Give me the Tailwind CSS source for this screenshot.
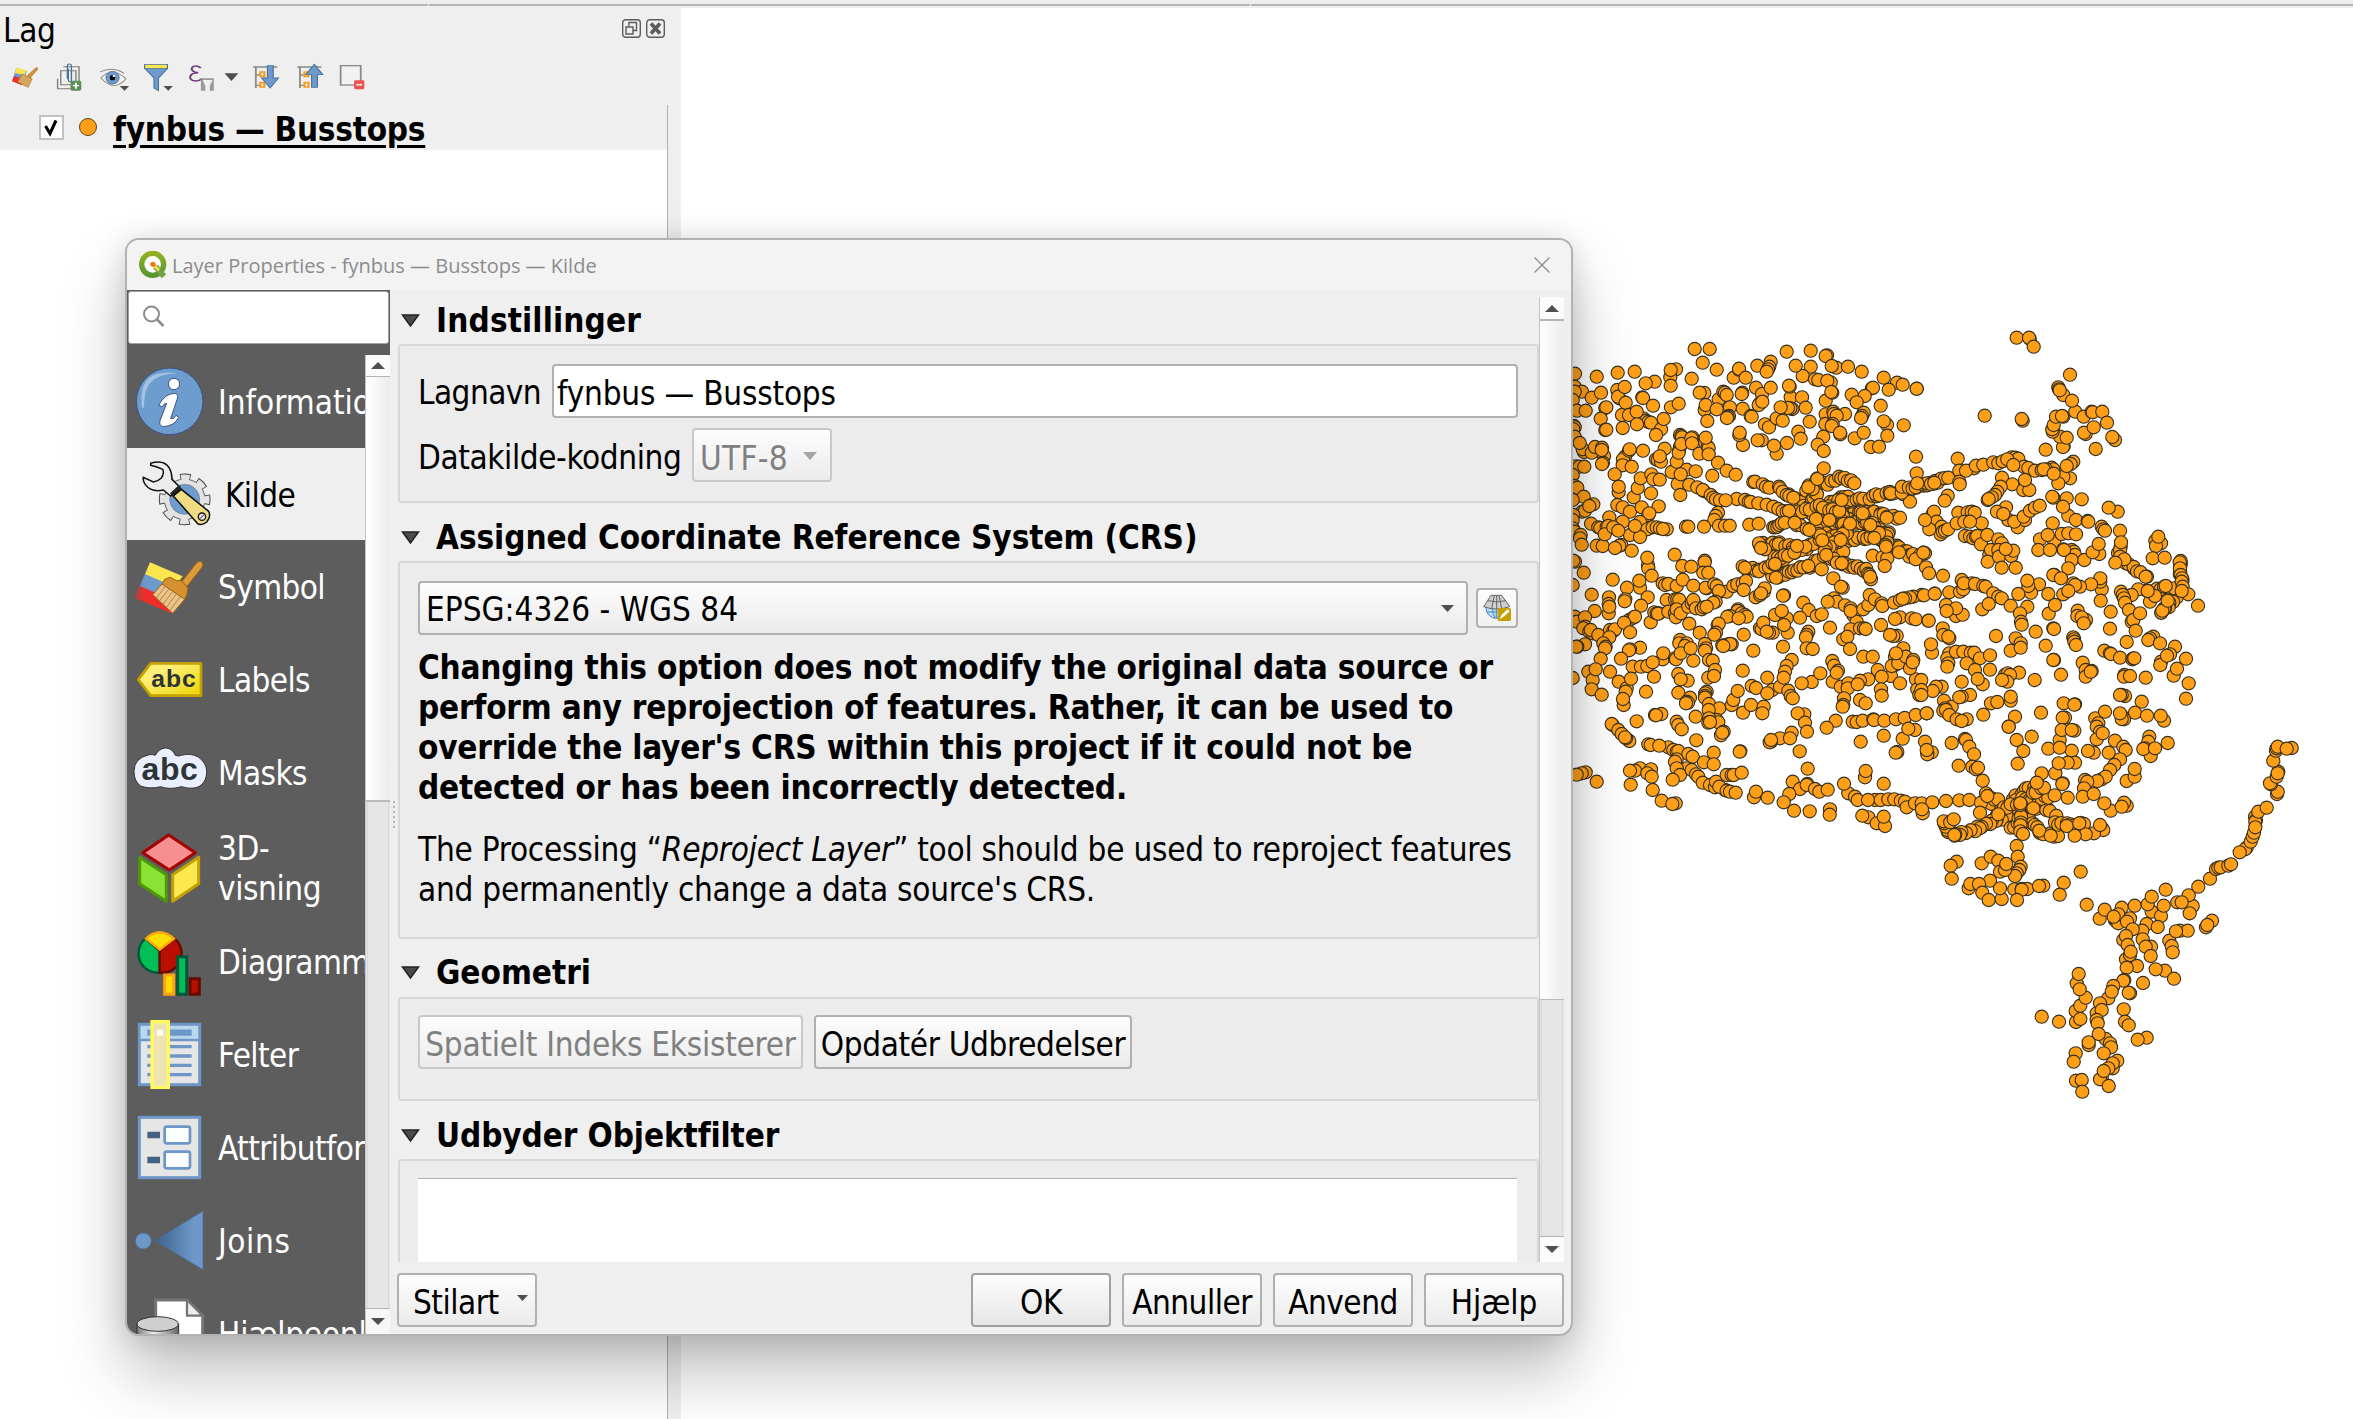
<!DOCTYPE html>
<html lang="da">
<head>
<meta charset="utf-8">
<title>Layer Properties</title>
<script src="https://cdn.jsdelivr.net/npm/@tailwindcss/browser@4"></script>
</head>
<body class="bg-white">
<div class="relative w-[2353px] h-[1419px] overflow-hidden bg-[#efefef] flex flex-col text-black text-[33px] leading-[40px] font-['DejaVu_Sans_Condensed','DejaVu_Sans',sans-serif] whitespace-nowrap tracking-[-0.3px]">
  <div class="h-[4px] shrink-0"></div>
  <div class="h-[2px] shrink-0 flex gap-[1px]"><div class="w-[428px] bg-[#b5b5b5]"></div><div class="w-[821px] bg-[#b5b5b5]"></div><div class="flex-1 bg-[#b5b5b5]"></div></div>

  <div class="flex flex-1 min-h-0">
    <aside class="w-[681px] shrink-0 flex flex-col">
      <div class="h-[50px] pl-[3px] pr-[16px] flex justify-between">
        <span class="pt-[5px]">Lag</span>
        <span class="flex gap-[5px] pt-[13px]">
          <svg width="19" height="19" viewBox="0 0 19 19" fill="none" stroke="#5c5c5c" stroke-width="1.4"><rect x=".7" y=".7" width="17.6" height="17.6" rx="3"/><path d="M7 7V3.5h7.5v8H11M4 8h7v7H4z"/></svg>
          <svg width="19" height="19" viewBox="0 0 19 19" fill="none" stroke="#5c5c5c" stroke-width="1.4"><rect x=".7" y=".7" width="17.6" height="17.6" rx="3"/><path d="M5 4.5l9 10M14 4.5l-9 10" stroke-width="3.6"/></svg>
        </span>
      </div>
      <div class="h-[49px] pt-[4px] pl-[8px] flex gap-[8px]">
        <svg width="36" height="36" viewBox="17.9 180 80.6 108" preserveAspectRatio="none"><path d="M36 204l24 9-8 34-24-5z" fill="#6d9acb"/><path d="M37 203l22 8-4 14-22-6z" fill="#fbe64d"/><path d="M30 230l20 22-22-8z" fill="#ee2d2a"/><path d="M27 244l6-16 20 12-4 16z" fill="#ee2d2a"/><path d="M62 226l20-24 3 5-18 27z" fill="#d6932f" stroke="#9c6214" stroke-width="1.5"/><path d="M50 222l22 14-9 26-24-16z" fill="#d9a662" stroke="#9c6214" stroke-width="1.5"/></svg>
        <svg width="36" height="36" viewBox="116.5 180 80.6 108" preserveAspectRatio="none" fill="none" stroke="#7d7d73" stroke-width="3"><path d="M129 236v30h30M136 212v42h34v-42zM142 200h35v44"/><path d="M151 236v-38q0-7 5-6 4 0 4 6v42q-1 6-4 5-3-1-3-5v-34" stroke="#47709c"/><rect x="158" y="242" width="24" height="30" rx="4" fill="#5a8f56" stroke="none"/><path d="M170 248v18M163 257h14" stroke="#fff" stroke-width="4"/></svg>
        <svg width="36" height="36" viewBox="215 180 80.6 108" preserveAspectRatio="none"><path d="M226 234q24-36 56 2-26 42-56-2z" fill="#f7f7f4" stroke="#8a8a82" stroke-width="2.5"/><path d="M224 216q28-18 54 4" fill="none" stroke="#8a8a82" stroke-width="2.5"/><ellipse cx="252" cy="233" rx="15" ry="19" fill="#6d9acb" stroke="#47709c" stroke-width="2"/><ellipse cx="252" cy="233" rx="6" ry="8"/><ellipse cx="255" cy="228" rx="3" ry="3" fill="#fff"/><path d="M268 258h21l-10 14z" fill="#4d4d4d"/></svg>
        <svg width="36" height="36" viewBox="313.6 180 80.6 108" preserveAspectRatio="none"><path d="M325 206h50l-20 28v38l-10-8v-30z" fill="#6d9acb" stroke="#47709c" stroke-width="2.5"/><path d="M324 193h51v13h-51z" fill="#fbe64d" stroke="#47709c" stroke-width="2.5"/><path d="M366 258h21l-10 14z" fill="#4d4d4d"/></svg>
        <svg width="36" height="36" viewBox="412.2 180 80.6 108" preserveAspectRatio="none"><path d="M450 204q-8-9-16-5-8 6-2 14 4 5 12 5-16 0-18 12-1 12 13 13 8 0 14-8" fill="none" stroke="#6c3f78" stroke-width="4.5"/><path d="M450 235h29v37h-9v-14l6-18h-22l6 18v14h-10z" fill="#9a9a94"/></svg>
        <svg class="-ml-[6px]" width="20" height="36" viewBox="497.3 180 44.8 108" preserveAspectRatio="none"><path d="M503 220h31l-15.500 23z" fill="#4d4d4d"/></svg>
        <svg class="-ml-[2px]" width="36" height="36" viewBox="555.5 180 80.6 108" preserveAspectRatio="none"><path d="M567 201h54M573 202v62M573 225h8M573 256h8" stroke="#8a8a82" stroke-width="4" fill="none"/><path d="M583 216h9v13h-9zM583 248h9v13h-9z" fill="#fff" stroke="#f79a1c" stroke-width="5"/><path d="M599 197h13v37h12l-19 30-19-30h13z" fill="#6d9acb" stroke="#47709c" stroke-width="2.500"/></svg>
        <svg width="36" height="36" viewBox="654.1 180 80.6 108" preserveAspectRatio="none"><path d="M666 201h54M672 202v62M672 225h8M672 256h8" stroke="#8a8a82" stroke-width="4" fill="none"/><path d="M682 216h9v13h-9zM682 248h9v13h-9z" fill="#fff" stroke="#f79a1c" stroke-width="5"/><path d="M698 262h13v-38h12l-19-31-19 31h13z" fill="#6d9acb" stroke="#47709c" stroke-width="2.500"/></svg>
        <svg width="36" height="36" viewBox="752.6 180 80.6 108" preserveAspectRatio="none"><rect x="763" y="197" width="45" height="58" fill="#f2f2f2" stroke="#8a8a82" stroke-width="4"/><rect x="793" y="241" width="23" height="27" rx="4" fill="#ee4f50"/><path d="M798 254h13" stroke="#fff" stroke-width="5"/></svg>
      </div>
      <div class="w-[668px] flex-1 border-r border-[#b0b0b0] bg-white">
        <div class="h-[45px] pl-[39px] flex bg-[#efefef]">
          <div class="mt-[10px] w-[25px] h-[25px] bg-white border-2 border-[#c2c2c2]"><svg width="21" height="21" viewBox="0 0 21 21" fill="none" stroke="#000" stroke-width="3"><path d="M4.500 9l4.500 7.500L15 3.500"/></svg></div>
          <div class="mt-[13px] ml-[15px] w-[18px] h-[18px] rounded-full bg-[#ff9e17] border border-[#5a4520]"></div>
          <div class="ml-[16px] mt-[5px] font-bold underline decoration-[3px] underline-offset-[4px] tracking-[-0.25px]">fynbus — Busstops</div>
        </div>
      </div>
    </aside>
    <main class="flex-1 mt-[2px] bg-white overflow-hidden"><svg id="map" width="1672" height="1411" viewBox="681 8 1672 1411" fill="#ff9e17" stroke="#35301f" stroke-width="1.1"></svg></main>
  </div>

  <section class="absolute left-[125px] top-[238px] w-[1448px] h-[1098px] rounded-[14px] border-2 border-[#b2b2b2] bg-[#efefef] overflow-hidden flex flex-col shadow-[0_36px_64px_rgba(0,0,0,0.26),0_2px_28px_rgba(0,0,0,0.13)]">
    <header class="h-[50px] shrink-0 bg-[#f3f3f3] flex items-center pl-[12px] pr-[21px] text-[20px] text-[#8c8c8c] font-['Open_Sans','Noto_Sans',sans-serif] tracking-[0px]">
      <svg width="28" height="28" viewBox="57 62 84 84"><defs><linearGradient id="q" x1="0" y1="0" x2="0" y2="1"><stop offset="0" stop-color="#93b023"/><stop offset="1" stop-color="#589632"/></linearGradient></defs><circle cx="98" cy="102" r="33" fill="#fff" stroke="url(#q)" stroke-width="16"/><path d="M106 108l26 30" stroke="#6fa343" stroke-width="17"/><path d="M103 106l14 14" stroke="#f3e04d" stroke-width="9"/><circle cx="99" cy="102" r="8" fill="#ee7913"/></svg>
      <span class="ml-[5px] mt-[2px]">Layer Properties - fynbus — Busstops — Kilde</span>
      <svg class="ml-auto" width="16" height="16" viewBox="0 0 16 16" stroke="#8c8c8c" stroke-width="1.300"><path d="M.5.5l15 15M15.500.5l-15 15"/></svg>
    </header>
    <div class="flex flex-1 min-h-0">
      <nav class="w-[263px] shrink-0 bg-[#5d5d5d] flex flex-col text-white tracking-[-0.6px]">
        <div class="h-[53px] mt-px ml-px mr-px shrink-0 bg-white border border-[#a0a0a0] rounded-[3px] pl-[13px] pt-[13px]"><svg width="23" height="23" viewBox="0 0 23 23" fill="none" stroke="#8c8c8c" stroke-width="2"><circle cx="9.500" cy="9" r="7.500"/><path d="M15 14.500l6.500 6.500" stroke-width="2.500"/></svg></div>
        <div class="flex flex-1 min-h-0">
          <div class="w-[238px] pt-[11px] overflow-hidden">
            <div class="h-[93px] flex items-center"><svg class="shrink-0 mr-[7px]" width="84" height="93" viewBox="21 375 252 279"><circle cx="149" cy="514" r="100" fill="#6d9ccf" stroke="#3b5180" stroke-width="3"/><path d="M66 534Q54 450 110 432q30-8 60-2-70 4-88 42-10 24-10 60z" fill="#a5c1e2"/><circle cx="162" cy="462" r="17" fill="#fff" stroke="#3b5180" stroke-width="3"/><path d="M116 526q18-36 50-36 10 4 6 16l-20 60q10 2 16-10l8 6q-12 26-46 28-14-4-10-18l20-52q-6-2-14 10z" fill="#fff" stroke="#3b5180" stroke-width="3"/></svg><span class="pt-[3px] tracking-[0px]">Information</span></div>
            <div class="h-[92px] flex items-center bg-[#efefef] text-black"><svg class="shrink-0 mr-[14px]" width="84" height="92" viewBox="21 654 252 276"><circle cx="194" cy="808" r="69" fill="none" stroke="#444" stroke-width="17" stroke-dasharray="32 22.190" stroke-dashoffset="16"/><circle cx="194" cy="808" r="61" fill="#e3e3e3" stroke="#444" stroke-width="2.500"/><circle cx="194" cy="808" r="66" fill="none" stroke="#e3e3e3" stroke-width="17" stroke-dasharray="26 25.840" stroke-dashoffset="13"/><circle cx="194" cy="808" r="45" fill="#6d9ccf" stroke="#777" stroke-width="2"/><path d="M92 700q40-12 56 14 8 14 8 34l24 24-28 26-22-18q-36 8-54-16-8-12-6-22l30 14q14-2 24-12 10-16 4-26-16-8-36-12z" fill="#ececec" stroke="#111" stroke-width="4.500"/><path d="M150 790l24-22 12 10-24 24z" fill="#222"/><path d="M160 798l24-20 82 66q8 16-6 32-12 10-26 6z" fill="#f0dc85" stroke="#111" stroke-width="4.500"/><circle cx="246" cy="860" r="11" fill="#eee" stroke="#111" stroke-width="4"/><path d="M240 866l12-12" stroke="#111" stroke-width="3"/></svg><span class="pt-[3px]">Kilde</span></div>
            <div class="h-[93px] flex items-center"><svg class="shrink-0 mr-[7px]" width="84" height="93" viewBox="21 930 252 279"><defs><linearGradient id="b" x1="0" x2="1"><stop offset="0" stop-color="#5d5d5d" stop-opacity=".55"/><stop offset=".4" stop-color="#5d5d5d" stop-opacity="0"/></linearGradient></defs><path d="M90 997l98 42-30 40-84-44z" fill="#fbe64d"/><path d="M75 1032l60 26-20 60-56-49z" fill="#6d9acb"/><path d="M59 1068l62 26 36 57-113-48z" fill="#ee2d2a"/><path d="M90 997l30 14-40 104-36-12z" fill="url(#b)"/><path d="M180 1062l52-66q10-6 16 4 2 6-2 12l-52 66z" fill="#dc9a3a" stroke="#9c6214" stroke-width="3"/><path d="M150 1042l20 10 14 0 20 22-4 22-8 14-66-46 8-16z" fill="#d5912f" stroke="#9c6214" stroke-width="3"/><path d="M126 1062l68 46-36 42-60-56z" fill="#eac48a" stroke="#9c6214" stroke-width="3"/><path d="M135 1070l-26 34M146 1078l-27 34M157 1086l-28 36M168 1093l-28 38M180 1101l-30 40" stroke="#a87430" stroke-width="2.500"/></svg><span class="pt-[3px]">Symbol</span></div>
            <div class="h-[93px] flex items-center"><svg class="shrink-0 mr-[7px]" width="84" height="93" viewBox="21 39 252 279"><defs><linearGradient id="y" x1="0" y1="0" x2="1" y2="1"><stop offset=".3" stop-color="#fdf07a"/><stop offset="1" stop-color="#ecd400"/></linearGradient></defs><path d="M92 130h151v97H92l-37-48z" fill="url(#y)" stroke="#c4a000" stroke-width="8" stroke-linejoin="round"/><text x="162" y="202" text-anchor="middle" font-family="Liberation Sans" font-weight="700" font-size="74" letter-spacing="3" fill="#2e3436">abc</text></svg><span class="pt-[3px]">Labels</span></div>
            <div class="h-[92px] flex items-center"><svg class="shrink-0 mr-[7px]" width="84" height="92" viewBox="21 318 252 276"><path d="M88 404q8-2 18 2 10-20 30-22 20 0 30 22 10 4 18 0 30-8 52 6 24 18 24 42 0 30-20 44-20 12-56 2-34 10-62 0-34 8-60-2-20-14-20-44 0-40 46-50z" fill="#e9effe" stroke="#222" stroke-width="2.500"/><text x="150" y="481" text-anchor="middle" font-family="Liberation Sans" font-weight="700" font-size="96" letter-spacing="2" fill="#2e3436">abc</text></svg><span class="pt-[3px]">Masks</span></div>
            <div class="h-[97px] flex items-center"><svg class="shrink-0 mr-[7px]" width="84" height="97" viewBox="21 594 252 291" stroke-width="9" stroke-linejoin="round"><path d="M146 645l80 53-78 52-80-52z" fill="#f68f8f" stroke="#a40000"/><path d="M59 712l80 52v80l-80-53z" fill="#8ae234" stroke="#4e9a06"/><path d="M236 712l-78 52v80l78-53z" fill="#fce94f" stroke="#c4a000"/></svg><span class="pt-[5px] tracking-[-0.4px]">3D-<br>visning</span></div>
            <div class="h-[93px] flex items-center"><svg class="shrink-0 mr-[7px]" width="84" height="93" viewBox="21 885 252 279"><path d="M119 993L76 956a58 58 0 0 0 43 102z" fill="#00bf57" stroke="#00563a" stroke-width="7"/><path d="M119 993l45-37a58 58 0 0 1-45 102z" fill="#b80f00" stroke="#660b00" stroke-width="7"/><path d="M119 989L78 956q40-38 84 0z" fill="#ffdd00" stroke="#ffa30f" stroke-width="7"/><path d="M134 1065h27v58h-27z" fill="#ffdd00" stroke="#ffa30f" stroke-width="9"/><path d="M173 1010h27v113h-27z" fill="#00bf57" stroke="#00563a" stroke-width="9"/><path d="M210 1076h28v47h-28z" fill="#b80f00" stroke="#660b00" stroke-width="9"/></svg><span class="pt-[3px]">Diagrammer</span></div>
            <div class="h-[93px] flex items-center"><svg class="shrink-0 mr-[7px]" width="84" height="93" viewBox="21 84 252 279"><rect x="58" y="133" width="181" height="181" fill="#e6e6e6" stroke="#6d97c8" stroke-width="9"/><path d="M62 138h172v42H62z" fill="#b9d8ec"/><path d="M54 180h188" stroke="#6d97c8" stroke-width="8"/><path d="M82 158h133" stroke="#6d97c8" stroke-width="19"/><path d="M82 200h133M82 228h133M82 256h133M82 284h133" stroke="#6d97c8" stroke-width="10"/><rect x="96" y="125" width="49" height="197" fill="#ede4b2" stroke="#fffb5b" stroke-width="10"/><path d="M111 149h18v18h-18z" fill="#fff"/></svg><span class="pt-[3px]">Felter</span></div>
            <div class="h-[93px] flex items-center"><svg class="shrink-0 mr-[7px]" width="84" height="93" viewBox="21 363 252 279"><rect x="58" y="412" width="181" height="181" fill="#e6e6e6" stroke="#6d97c8" stroke-width="9"/><path d="M82 465h38M82 540h38" stroke="#45617f" stroke-width="19"/><rect x="134" y="440" width="76" height="50" rx="6" fill="#fafeff" stroke="#6d97c8" stroke-width="8"/><rect x="134" y="515" width="76" height="50" rx="6" fill="#fafeff" stroke="#6d97c8" stroke-width="8"/></svg><span class="pt-[3px]">Attributformular</span></div>
            <div class="h-[92px] flex items-center"><svg class="shrink-0 mr-[7px]" width="84" height="92" viewBox="21 642 252 276"><defs><linearGradient id="j"><stop offset="0" stop-color="#3a6189"/><stop offset=".8" stop-color="#6d97c8"/></linearGradient></defs><circle cx="70" cy="783" r="24" fill="#6d97c8" stroke="#456b94" stroke-width="2"/><path d="M104 782l145-89v176z" fill="url(#j)" stroke="#456b94" stroke-width="2"/></svg><span class="pt-[3px] tracking-[0.6px]">Joins</span></div>
            <div class="h-[93px] flex items-center"><svg class="shrink-0 mr-[7px]" width="84" height="93" viewBox="21 918 252 279"><path d="M107 960h94l47 47v150H107z" fill="#fff" stroke="#757575" stroke-width="9"/><path d="M201 960v47h47z" fill="#eee" stroke="#757575" stroke-width="7"/><defs><linearGradient id="h"><stop offset="0" stop-color="#777"/><stop offset=".4" stop-color="#eee"/><stop offset="1" stop-color="#666"/></linearGradient></defs><path d="M51 1032v80h125v-80z" fill="url(#h)" stroke="#333" stroke-width="3"/><ellipse cx="113" cy="1032" rx="62" ry="22" fill="#cfcfcf" stroke="#333" stroke-width="3"/></svg><span class="pt-[4px] tracking-[-0.2px]">Hjælpeonline</span></div>
          </div>
          <div class="w-[25px] mt-[11px] bg-[#e6e6e6] border-l border-[#c4c4c4] flex flex-col">
            <div class="h-[22px] bg-[#fbfbfb] border-b border-[#b5b5b5] flex items-center justify-center"><svg width="14" height="7" viewBox="0 0 14 7" fill="#4f4f4f"><path d="M0 7h14L7 0z"/></svg></div>
            <div class="h-[425px] bg-linear-to-r from-white to-[#ececec] border-b-2 border-[#bbb]"></div>
            <div class="flex-1 mx-[1px] border-x border-[#d9d9d9]"></div>
            <div class="h-[26px] bg-[#f7f7f7] border-t border-[#b5b5b5] flex items-center justify-center"><svg width="14" height="7" viewBox="0 0 14 7" fill="#4f4f4f"><path d="M0 0h14L7 7z"/></svg></div>
          </div>
        </div>
      </nav>
      <div class="w-[8px] shrink-0 pt-[511px] flex flex-col gap-[3px] pl-[3px]"><i class="size-[2px] bg-[#b5b5b5]"></i><i class="size-[2px] bg-[#b5b5b5]"></i><i class="size-[2px] bg-[#b5b5b5]"></i><i class="size-[2px] bg-[#b5b5b5]"></i><i class="size-[2px] bg-[#b5b5b5]"></i><i class="size-[2px] bg-[#b5b5b5]"></i></div>
      <div class="flex-1 flex flex-col min-w-0">
        <div class="h-[972px] shrink-0 flex">
          <div class="w-[1141px] overflow-hidden flex flex-col">
            <h2 class="h-[54px] shrink-0 pt-[11px] pl-[3px] flex font-bold"><svg class="mt-[13px] mr-[16px]" width="19" height="13" viewBox="0 0 19 13"><path d="M1.500 1h16L9.500 12z" fill="#4a4a4a" stroke="#222" stroke-width="1.500"/></svg><span class="tracking-[0.15px]">Indstillinger</span></h2>
            <div class="h-[159px] shrink-0 border-2 border-[#d8d8d8] rounded-[3px] bg-[#ececec] pl-[18px] pr-[19px] pt-[18px]">
              <div class="flex h-[54px] items-center"><span class="pt-[3px] w-[134px] tracking-[-0.55px]">Lagnavn</span><div class="flex-1 h-[54px] bg-white border-2 border-[#b0b0b0] rounded-[4px] pl-[3px] pt-[8px] tracking-[-0.2px]">fynbus — Busstops</div></div>
              <div class="flex h-[54px] items-center mt-[10px]"><span class="pt-[5px] w-[274px] tracking-[-0.4px]">Datakilde-kodning</span><div class="w-[140px] h-[54px] bg-linear-to-b from-[#fdfdfd] to-[#ebebeb] border-2 border-[#c8c8c8] rounded-[4px] pl-[6px] pt-[9px] flex text-[#808080] tracking-[0.3px]"><span>UTF-8</span><svg class="mt-[13px] ml-[15px]" width="14" height="8" viewBox="0 0 14 8" fill="#a5a5a5"><path d="M0 0h14L7 8z"/></svg></div></div>
            </div>
            <h2 class="h-[58px] shrink-0 pt-[15px] pl-[3px] flex font-bold"><svg class="mt-[13px] mr-[16px]" width="19" height="13" viewBox="0 0 19 13"><path d="M1.500 1h16L9.500 12z" fill="#4a4a4a" stroke="#222" stroke-width="1.500"/></svg><span class="tracking-[-0.07px]">Assigned Coordinate Reference System (CRS)</span></h2>
            <div class="h-[378px] shrink-0 border-2 border-[#d8d8d8] rounded-[3px] bg-[#ececec] pl-[18px] pr-[19px] pt-[18px]">
              <div class="flex items-center gap-[8px]"><div class="w-[1050px] h-[54px] bg-linear-to-b from-[#fdfdfd] to-[#ebebeb] border-2 border-[#b0b0b0] rounded-[4px] pl-[6px] pr-[12px] flex items-center justify-between"><span class="pt-[3px] tracking-[0px]">EPSG:4326 - WGS 84</span><svg width="13" height="7" viewBox="0 0 13 7" fill="#4f4f4f"><path d="M0 0h13L6.500 7z"/></svg></div>
              <div class="w-[42px] h-[40px] bg-linear-to-b from-[#fdfdfd] to-[#f0f0f0] border-2 border-[#b0b0b0] rounded-[4px] flex items-center justify-center"><svg width="28" height="28" viewBox="310 1092 84 84" fill="none" stroke="#666" stroke-width="3"><circle cx="350" cy="1134" r="31" fill="#b9dcf5" stroke="#4f87c4"/><path d="M322 1146h64M350 1130v36M338 1130q0 22 8 34M364 1130q0 20-6 30" stroke="#4f87c4"/><path d="M334 1096h32l24 34q-40 14-78 0z" fill="#cfcfcf"/><path d="M325 1112q26 8 54 0M344 1096l-8 40M358 1096l8 40M351 1096v40"/><rect x="354" y="1134" width="40" height="39" rx="5" fill="#c4a000" stroke="none"/><path d="M360 1168l6-14 18-16 6 6-18 16z" fill="#fff" stroke="none"/></svg></div></div>
              <p class="mt-[13px] font-bold tracking-[-0.2px]">Changing this option does not modify the original data source or<br>perform any reprojection of features. Rather, it can be used to<br>override the layer's CRS within this project if it could not be<br>detected or has been incorrectly detected.</p>
              <p class="mt-[22px] tracking-[-0.25px]">The Processing “<i>Reproject Layer</i>” tool should be used to reproject features<br>and permanently change a data source's CRS.</p>
            </div>
            <h2 class="h-[58px] shrink-0 pt-[14px] pl-[3px] flex font-bold"><svg class="mt-[13px] mr-[16px]" width="19" height="13" viewBox="0 0 19 13"><path d="M1.500 1h16L9.500 12z" fill="#4a4a4a" stroke="#222" stroke-width="1.500"/></svg><span class="tracking-[0px]">Geometri</span></h2>
            <div class="h-[104px] shrink-0 border-2 border-[#d8d8d8] rounded-[3px] bg-[#ececec] pl-[18px] pt-[16px] flex gap-[11px]">
              <div class="w-[385px] h-[54px] bg-linear-to-b from-[#fdfdfd] to-[#ebebeb] border-2 border-[#c8c8c8] rounded-[4px] text-center pt-[8px] text-[#808080] tracking-[-0.25px]">Spatielt Indeks Eksisterer</div>
              <div class="w-[318px] h-[54px] bg-linear-to-b from-[#fdfdfd] to-[#ebebeb] border-2 border-[#b0b0b0] rounded-[4px] text-center pt-[8px] tracking-[-0.35px]">Opdatér Udbredelser</div>
            </div>
            <h2 class="h-[58px] shrink-0 pt-[15px] pl-[3px] flex font-bold"><svg class="mt-[13px] mr-[16px]" width="19" height="13" viewBox="0 0 19 13"><path d="M1.500 1h16L9.500 12z" fill="#4a4a4a" stroke="#222" stroke-width="1.500"/></svg><span class="tracking-[-0.1px]">Udbyder Objektfilter</span></h2>
            <div class="h-[200px] shrink-0 border-2 border-[#d8d8d8] rounded-[3px] bg-[#ececec] pl-[18px] pr-[20px] pt-[17px]"><div class="h-[160px] bg-white border-t border-[#b0b0b0]"></div></div>
          </div>
          <div class="w-[25px] mt-[7px] bg-[#e6e6e6] border-l border-[#c4c4c4] flex flex-col">
            <div class="h-[24px] bg-[#fbfbfb] border-b-2 border-[#b5b5b5] flex items-center justify-center"><svg width="14" height="7" viewBox="0 0 14 7" fill="#4f4f4f"><path d="M0 7h14L7 0z"/></svg></div>
            <div class="h-[679px] bg-linear-to-r from-white to-[#ececec] border-b border-[#bbb]"></div>
            <div class="flex-1 mx-[1px] border-x border-[#d9d9d9]"></div>
            <div class="h-[26px] bg-[#fbfbfb] border-t border-[#b5b5b5] flex items-center justify-center"><svg width="14" height="7" viewBox="0 0 14 7" fill="#4f4f4f"><path d="M0 0h14L7 7z"/></svg></div>
          </div>
        </div>
        <footer class="mt-[11px] -ml-px pr-[7px] flex gap-[11px] text-center tracking-[-0.5px]">
          <div class="w-[140px] h-[54px] bg-linear-to-b from-[#fdfdfd] to-[#ebebeb] border-2 border-[#b0b0b0] rounded-[4px] pt-[8px] pl-[14px] flex"><span>Stilart</span><svg class="mt-[12px] ml-[18px]" width="11" height="6" viewBox="0 0 11 6" fill="#4f4f4f"><path d="M0 0h11L5.500 6z"/></svg></div>
          <div class="ml-auto w-[140px] h-[54px] bg-linear-to-b from-[#fdfdfd] to-[#e6e6e6] border-2 border-[#a0a0a0] rounded-[4px] pt-[8px]">OK</div>
          <div class="w-[140px] h-[54px] bg-linear-to-b from-[#fdfdfd] to-[#ebebeb] border-2 border-[#b0b0b0] rounded-[4px] pt-[8px]">Annuller</div>
          <div class="w-[140px] h-[54px] bg-linear-to-b from-[#fdfdfd] to-[#ebebeb] border-2 border-[#b0b0b0] rounded-[4px] pt-[8px]">Anvend</div>
          <div class="w-[140px] h-[54px] bg-linear-to-b from-[#fdfdfd] to-[#ebebeb] border-2 border-[#b0b0b0] rounded-[4px] pt-[8px] tracking-[-0.1px]">Hjælp</div>
        </footer>
      </div>
    </div>
  </section>
</div>
<script>
// Bus stops per map tile. Coordinates are thirds of a pixel from the tile origin;
// routes are drawn as evenly spaced stops along a line, stops one by one.
const tiles = [
{ origin: [1560, 320], routes: [
'690,528 745,560 770,600 860,610 930,610','700,605 750,630','740,510 770,480 800,490 840,473 887,490','750,548 767,520 745,500','813,550 865,525','810,560 900,540 950,525 990,520 1030,518 1068,500 1120,490','815,570 880,580 960,580 1020,596','790,640 850,660 910,655 960,655 1010,680 1050,705 1090,700','600,672 660,672 740,685 800,650','640,770 700,755 745,738 800,705 850,690','550,740 600,752 650,730 690,700 740,685','800,705 845,730 880,742 915,748 935,775','870,600 930,615 985,640 975,680','835,540 860,640 790,690','900,580 960,640','700,580 780,560 840,575','760,620 790,660','640,715 700,700'],
stops: `45,161 110,170 173,158 224,155 348,148 331,172 332,197 332,150 395,176 404,87 449,87 428,128 470,149 521,173 537,149 537,146 557,173 592,137 632,125 628,140 624,148 620,155 680,95 752,92 801,106 797,108 752,140 728,168 707,137 765,178 775,180 812,187 802,182 829,143 815,138 864,140 905,155 971,173 1011,188 1028,194 1070,206 986,209 936,205 939,203 914,228 875,224 962,257
44,200 66,215 44,215 38,240 95,233 123,218 51,272 77,272 136,264 139,262 122,296 136,330 139,329 172,210 178,235 174,230 194,201 186,285 197,248 207,285 188,324 250,295 258,302 265,306 273,308 230,275 231,313 247,232 249,234 279,257 284,185 257,190 303,328 311,297 288,345 333,262 356,251
433,219 419,218 434,270 437,255 442,303 476,238 470,268 490,215 495,218 500,225 510,262 507,288 503,290 501,294 547,218 545,222 548,266 572,288 575,290 588,203 606,222 632,203 600,250 596,255 607,245 615,313 627,322 650,295 668,302 692,232 689,200 687,197 726,232 737,263 697,267 691,265 684,264 662,262 749,305 715,335 722,356 681,369 650,401 642,377 605,361 593,361 549,375 538,345 539,338
797,242 817,218 814,216 797,283 820,275 822,282 855,282 830,287 796,312 818,312 815,318 841,343 840,338 790,350 773,374 791,393 890,247 911,278 906,288 903,294 981,314 971,304 982,347 1031,316 884,355 911,338 932,381 957,380
42,318 44,322 40,328 44,350 72,396 68,388 59,369 95,398 105,381 132,408 129,428 126,432 126,383 125,390 48,439 58,440 73,440 38,465 44,498 52,503 71,530 100,553 67,575 75,572 88,558 38,540 40,585 38,600 38,625 44,635 62,645 60,655 65,674 110,677 128,678 184,675 178,677 165,684 215,692 93,611 115,622 121,624 148,592 140,622 145,618 134,643
195,410 189,418 207,392 209,388 249,392 188,436 215,440 164,463 176,516 176,500 221,532 233,504 242,475 273,520 274,463 280,478 299,479 288,418 293,420 303,425 314,386 299,409 335,456 353,492 350,425 361,525 380,449 362,463 407,454 388,494 412,502 431,513 428,510
360,345 364,348 366,352 360,380 357,392 356,398 364,372 397,352 394,355 396,370 418,401 436,368 443,380 446,384 446,403 437,353 474,428 500,452 527,464 457,467
172,555 188,562 210,575 245,562 296,559 265,585 268,580 188,605 240,606 262,628 278,622 290,622 300,625 320,628 309,627 210,645 240,651 160,622 175,632 225,618
452,525 460,533 468,538 480,541 530,537 497,541 555,540 566,545 572,546 595,550 620,554 640,560 655,567 668,573 680,575 687,573
474,578 467,588 463,600 477,617 432,620 378,620 385,620 495,617 509,617 568,614 596,611 640,622 645,622 652,620 658,615 665,610 674,608 704,608
580,486 585,485 608,493 618,500 628,503 657,500 660,505 668,515 680,525 688,528 700,533
772,477 791,445 938,707 968,712 982,715 974,738 1017,697 1050,545 768,597 808,600 845,540 870,611 908,580 931,615 943,654 978,680 842,660 799,705 845,730 820,775 848,803 843,800 785,748 930,770 711,678 645,732 745,738 597,670 615,688 603,684 648,773 748,630 992,520 1025,518 980,593 1067,718
344,704 264,735 265,745 262,713 275,767 158,779 201,803 196,838 194,844 240,803 238,782 263,832 243,857 367,738 394,740 434,722 434,727 430,758 445,758 308,790 315,795 325,792 350,798 368,779 400,797 440,805 437,803 463,793 470,798 478,816 500,815 477,813 520,798 532,793 548,790 558,783 551,810 587,832 600,825 612,815 614,805 603,820 672,826 669,827 730,848 555,743
45,725 71,758 38,795 40,722 95,824 147,832 146,852 146,880 148,860 104,873 44,890 50,905 75,892 75,920 70,925 88,935 98,940 92,930 115,945 150,930 160,933 165,928 148,952 208,900 220,893 225,890 192,908 210,937 130,970 137,980 135,985 75,973 52,980 49,980 240,983 210,988 207,991 183,1016 122,1016 272,907 283,877 290,880 298,880 294,881
320,840 325,875 345,838 352,838 358,839 345,880 348,892 350,868 362,880 385,860 395,850 402,846 400,840 408,865 425,868 432,862 467,845 460,848 440,860 388,911 419,938 534,868 533,873 545,880 555,885 560,890 510,888 502,890 536,895 473,915 476,911 468,938 463,944 551,944 487,976 503,973 515,973 511,972 490,978 580,992
600,925 605,928 610,908 638,938 627,938 620,935 683,938 645,885 680,895 665,873 672,915 669,980 746,870 720,893 770,888 785,883 810,923 745,935 740,945 738,952 740,985 758,987
822,835 830,845 803,845 855,856 880,885 890,905 872,865 872,873 872,928 900,925 912,925 917,927 850,958 862,950 870,987 910,868 925,855 929,825 945,838 965,850 967,858 1002,848 1020,840 1085,825 1060,830 1050,832 1035,835 1028,836 1124,821 963,915 1020,892 1005,897 1055,895 1067,898 1105,902 1010,947 1000,948 990,945 910,1010 938,1010
85,1055 98,1080 150,1055 107,1048 95,1108 125,1124 176,1085 218,1040 243,1040 262,1038 308,1018 278,1027 310,1000 345,1015 348,1018 360,960 358,970 380,970 375,978 362,1000 400,1022 392,985 435,972 438,985 435,992 447,1020 458,1022 465,1050 445,1073 462,1068 200,1105 197,1115 213,1076 258,1115 282,1070 191,1155 189,1137 355,1062 383,1082 362,1078 355,1118 390,1133 380,1145 384,1148 378,1150 407,1190 350,1205 355,1215 365,1228 230,1204 285,1185 304,1182 288,1186 38,1074
440,1115 436,1120 435,1128 435,1133 447,1152 478,1165 446,1170 470,1200 475,1207 447,1195 445,1208 450,1206 491,1235 483,1246 487,1238 409,1261 515,1155 520,1140 533,1113 548,1052 549,1178 573,1155 611,1160 607,1180 622,1073 575,1098 588,1104 637,1110 622,1120 695,1020 680,1038 675,1055 660,1100 685,1112 671,1073 692,1128 698,1135 755,1086 725,1090 781,1060 733,1183 713,1180 735,1208 741,1235 695,1238 660,1255 690,1255 633,1265 629,1267 633,1260 719,1294 541,1294 539,1295
817,1023 822,1037 834,1052 818,1085 830,1058 842,1100 865,1090 863,1105 925,1078 900,1082 893,1093 953,1050 993,1068 965,1070 963,1108 965,1127 852,1135 850,1155 848,1160 827,1202 800,1223 900,1140 917,1150 878,1205 890,1206 908,1202 940,1198 942,1200 973,1202 1008,1198 1034,1194 1067,1185 1100,1180 1020,1090 1068,1078 1072,1108 1078,1125 1030,985 1005,1010 1005,1035 995,1038 1015,1030 1038,1010 1008,1000 1060,1020 1050,1045 1058,1027 902,1265 971,1247 1028,1256 1065,1230 1045,1226 1012,1296 1007,1298
158,1215 155,1212 175,1230 185,1242 208,1263 198,1255 195,1252 265,1273 272,1275 325,1282 298,1277 340,1290 350,1295 355,1293 385,1302 350,1318 345,1325 398,1310 380,1345 350,1345 360,1365 338,1379 395,1350 408,1363 415,1370 428,1388 450,1395 465,1402 468,1385 495,1410 478,1400 500,1412 510,1415 527,1418 432,1327 461,1298 461,1333 500,1365 515,1365 521,1365 545,1358
77,1357 65,1360 50,1364 110,1385 240,1345 225,1352 210,1352 273,1348 262,1360 275,1370 212,1394 278,1410 305,1442 347,1450 337,1452 582,1432 588,1415 623,1433 698,1385 720,1407 742,1392 740,1395 765,1407 778,1415 803,1409 688,1422 671,1447 702,1472 749,1474 810,1468 809,1484 743,1346 865,1420 852,1391 885,1430 893,1440 945,1440 924,1440 962,1440 985,1438 1003,1438 1022,1442 1035,1445 1040,1462 1065,1450 915,1372 917,1353 971,1391 925,1492 907,1487 950,1510 975,1518 971,1490` },
{ origin: [1920, 320], routes: ['-50,505 -10,498 20,493 50,487 88,468','590,700 640,745 677,770','780,725 788,815 725,875','683,815 760,800'],
stops: `290,53 329,56 327,53 341,80 450,164 -10,206 194,287 308,302 305,297 415,202 417,208 430,225 419,211 466,275 456,242 491,290 515,275 518,277 547,275 561,308 497,342 492,338 521,322 585,360 577,351 527,387 377,389 431,378 429,381 420,350 440,353 398,335 397,328 401,315 408,290 430,290 426,288
113,416 43,488 118,452 162,445 138,452 168,437 190,434 220,427 235,430 248,424 275,412 285,413 295,416 262,418 312,440 325,444 345,452 280,435 365,450 395,443 400,448 378,448 371,448 450,475 430,470 415,490 401,461 460,425 452,432 440,438 118,485 119,493
246,473 277,493 310,510 328,510 315,480 242,500 232,515 225,525 215,532 203,540 206,537 83,527 74,542 38,582 42,575 50,605 65,620 62,643 68,635 75,632 84,628 28,628 15,600 115,578 143,577 155,575 110,610 133,605 164,578 185,610 150,605 135,648 150,650 160,655 168,650 172,648 183,673 202,645 235,658 245,670 258,562 231,575 265,600 250,582 293,622 315,600 283,605 311,590 330,572 345,563 359,557 400,533 397,530 440,535 485,538 445,587 429,560 468,600 503,603 505,605 593,575 566,563 545,620 550,628 555,632 600,632 398,610 360,658 403,665 383,645 425,642 445,640 468,643
208,704 222,695 213,690 203,725 235,690 237,710 274,708 280,692 257,687 245,743 287,743 15,700 10,698 18,742 27,760 69,767
355,690 430,688 455,690 462,695 465,705 390,690 432,690 455,720 403,765 445,745 493,720 538,702 518,697 536,672 602,680 600,690 600,710 603,667 613,718 586,728 677,770 706,662 723,670 708,678 715,650 698,715 734,713 782,723 779,727 780,745 782,765 786,775 785,785 788,800 805,823 785,813 834,857 737,798 733,865 724,878 727,872 743,842 690,845 705,828 655,808 635,825 683,813 603,815 608,825 612,835 615,848 627,870 635,905 640,900 660,880 647,932
572,875 570,926 545,808 542,842 541,785 541,775 513,793 480,800 460,790 465,795 430,823 445,813 385,822 357,793 333,818 325,798 322,782 295,822 400,765 423,775
12,826 44,821 88,817 120,815 130,808 125,780 155,790 131,790 165,792 190,798 197,800 220,820 235,830 245,835 272,857 187,868 206,852 322,860 300,880 303,905 305,914 78,855 108,888 128,884 108,865 80,873 26,902 68,925 70,945 88,955 85,950 36,998 33,973 228,948 347,935 287,955 302,970 272,992 302,983 386,881 405,855 400,925 402,927 377,977 402,1020 400,1020 423,1064 344,1080
473,872 472,888 498,900 485,892 491,910 460,952 462,958 463,965 468,975 488,1028 497,1050 497,1070 515,1053 512,1055 553,992 570,1000 573,1002 600,1013 637,1018 640,1015 643,1015 620,966 700,950 690,955 685,960 720,970 765,980 750,1003 723,1025 721,1035 741,1007 798,1016 761,1067 771,1046 806,1090 798,1136 613,1065 612,1070 630,1068 677,1073 615,1128 605,1125 600,1125
88,1000 82,1015 108,995 130,995 152,998 140,1030 163,998 180,1015 210,1006 85,1030 82,1040 165,1050 210,1049 188,1093 173,1077 125,1085 65,1100 48,1100 38,1113 4,1080 4,1110 4,1125 72,1142 95,1160 75,1165 70,1172 78,1170 88,1185 110,1198 140,1198 125,1203 150,1125 125,1130 118,1132 20,1180 190,1184 213,1150 232,1146 272,1142 272,1130 255,1065 263,1060 297,1058 270,1065 262,1085 246,1080 285,1190 266,1220 363,1178 431,1150 465,1153 463,1154 435,1193 428,1193 526,1195 555,1175 535,1210 665,1145 645,1178 608,1190 612,1198 605,1197 600,1180 681,1187 732,1202 722,1187 -12,410 -10,460 -8,490` },
{ origin: [1900, 720], routes: ['262,225 285,250 300,270 295,290','270,250 295,238','330,285 290,300 235,325 165,345 140,335 135,305 160,300','340,235 380,210 410,190','350,250 400,265 440,265 465,283','330,325 380,300 400,310 420,335 475,352','350,240 400,235 460,230','360,250 360,290 365,345','300,270 360,250','400,220 430,200','465,310 500,315 550,308'],
stops: `155,69 195,57 198,60 208,80 222,103 176,137 217,140 228,148 234,143 248,182 395,50 350,60 370,93 353,131 326,20 445,86 479,60 515,92 479,83 485,30 523,32 515,30 581,98 564,93 525,128 503,128 466,160 476,130 488,190 487,192 590,20 600,35 590,58 608,40 645,62 626,98 670,80 677,90 660,118 643,135 630,150 605,178 617,170 592,183 555,180 562,185 552,205 548,230 581,222 425,160 410,188 748,50 745,65 735,85 752,108 730,87 765,85 803,69 680,183 704,170 704,147
75,65 95,97 82,103 80,90 65,250 68,280 97,247 66,268 138,243 178,241 208,240 243,248 240,278 503,233 605,323 610,330 582,340 557,343 524,347 600,315 500,318 538,310 632,272 613,250 680,257 672,248 665,260 262,228 295,283 361,250 400,265 418,332 452,347 163,345
350,378 353,410 362,440 358,450 350,460 345,468 170,425 152,437 155,476 245,430 272,410 295,422 300,455 315,450 319,432 270,482 206,505 211,492 237,492 247,518 266,540 305,537 300,505 343,508 365,507 382,507 365,509 351,540 430,497 417,498 491,488 479,524 542,455 560,554
599,596 614,569 665,563 704,557 645,600 650,605 655,610 655,583 641,590 690,595 681,605 740,612 727,632 698,628 755,575 743,553 755,530 797,509 783,588 791,557 773,621 670,660 678,648 683,675 678,718 690,705 692,695 711,738 680,743 673,780 670,782 728,658 753,680 737,680 752,708 729,789 690,820 686,818 640,798 625,835 635,815 600,850 590,880 605,870 590,900 593,910 617,957 630,970 633,982 596,942 611,1000 652,1022 638,1045 638,1030 625,1045 605,1075 600,1078 611,1053 626,1098 566,975 566,967 527,1000 521,1025 528,1082 545,1080 547,1115 425,890 477,905 528,906 527,873 541,897 541,857 557,833 530,790 539,808 536,762 671,868 675,905 686,916 740,953 713,959 795,752 767,748 822,776 808,662 815,678 818,697 840,632 863,632 828,634 936,602 918,622 922,615 878,558 869,580 832,547 866,526 845,547
895,500 930,476 948,447 955,443 962,442 985,437 993,433 1040,383 1035,388 1019,397 1052,365 1058,350 1062,338 1065,290 1068,300 1066,305 1066,322 1075,275 1100,263 1131,222 1133,215 1113,193 1110,190 1130,170 1135,155 1133,160 1120,122 1128,92 1130,85 1133,80 1175,84 1160,86` }
];
const parse = s => s.trim().split(/\s+/).map(p => p.split(',').map(Number));
let out = '';
for (const { origin: [ox, oy], routes, stops } of tiles) {
  const dot = (x, y) => { out += `<circle cx="${(ox + x / 3).toFixed(1)}" cy="${(oy + y / 3).toFixed(1)}" r="6.6"/>`; };
  let k = 0;
  for (const r of routes) {
    const p = parse(r);
    for (let i = 0; i + 1 < p.length; i++) {
      const [a, b] = p[i], [c, d] = p[i + 1], n = Math.max(1, Math.round(Math.hypot(c - a, d - b) / 13));
      for (let j = 0; j <= n; j++, k++) dot(a + (c - a) * j / n + (k * 7 % 9) - 4, b + (d - b) * j / n + (k * 5 % 11) - 5);
    }
  }
  for (const [x, y] of parse(stops)) dot(x, y);
}
document.getElementById('map').innerHTML = out;
</script>
</body>
</html>
